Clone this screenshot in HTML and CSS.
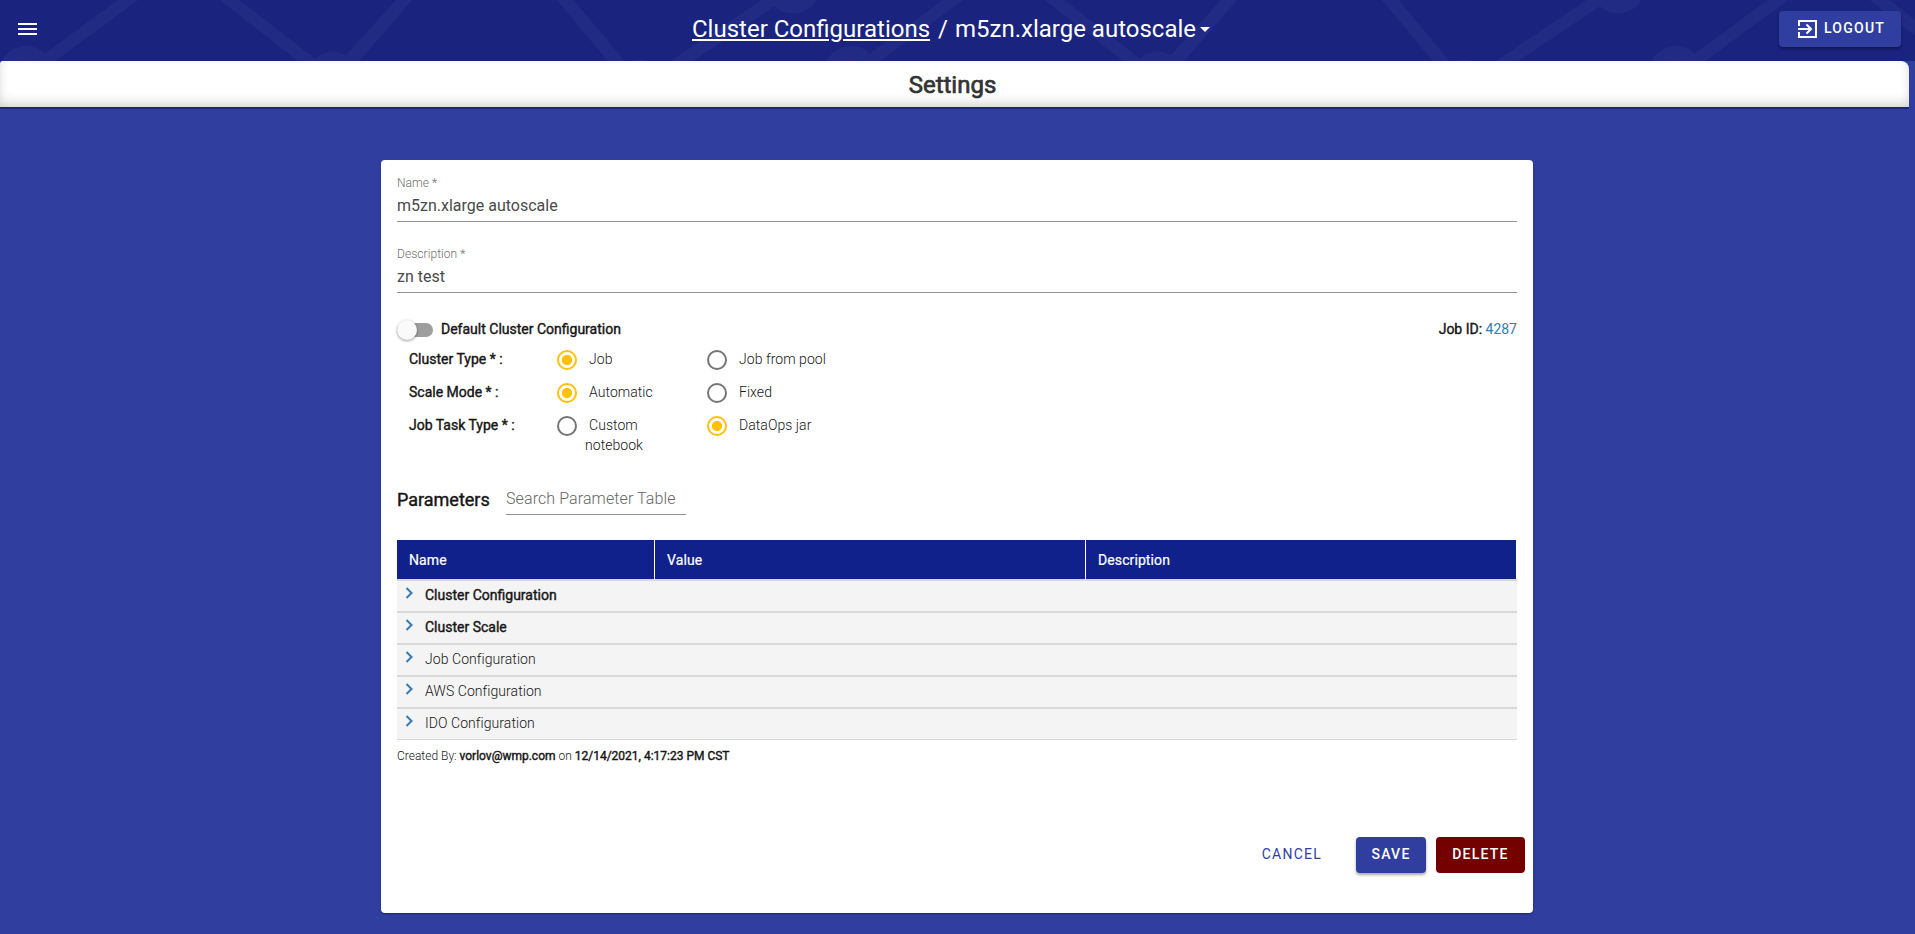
FILE: index.html
```html
<!DOCTYPE html>
<html lang="en">
<head>
<meta charset="utf-8">
<title>Cluster Configurations</title>
<link rel="stylesheet" href="styles.css">
</head>
<body>
<header class="topbar">
  <svg class="topbar-art" width="1915" height="61" aria-hidden="true">
    <defs>
      <pattern id="network" width="825" height="61" patternUnits="userSpaceOnUse">
        <g fill="#212b83">
          <path d="M118 0h20L55 61H35zM220 0h19L318 61H298zM396 0h16L359 61H341zM557 0h16.500L624.500 61H608zM762 0h22L693 61H671z"/>
          <circle cx="26" cy="73" r="27"/>
          <circle cx="333" cy="79" r="27"/>
          <circle cx="640" cy="87" r="27"/>
          <circle cx="793" cy="-13.500" r="27"/>
        </g>
        <g fill="#252c80">
          <circle cx="26" cy="73" r="14.500"/>
          <circle cx="793" cy="-13.500" r="14.500"/>
        </g>
      </pattern>
    </defs>
    <rect width="1915" height="61" fill="url(#network)"/>
  </svg>
  <svg class="menu" width="19" height="12" viewBox="0 0 19 12" fill="#fff"><path d="M0 0h19v2H0zM0 5h19v2H0zM0 10h19v2H0z"/></svg>
  <h1 class="crumbs"><a class="crumb-link">Cluster Configurations</a><span class="slash">/</span><span class="current">m5zn.xlarge autoscale</span><i class="caret"></i></h1>
  <button class="btn logout"><svg width="19" height="18" viewBox="0 0 19 18" fill="none" stroke="#fff" stroke-width="2"><path d="M1 6V1h17v16H1v-5M0 9h13M8.500 4.500L13 9l-4.500 4.500"/></svg><span>LOGOUT</span></button>
</header>
<nav class="tabbar"><span class="tab">Settings</span></nav>
<main class="card">
  <div class="field"><label>Name *</label><div class="value">m5zn.xlarge autoscale</div></div>
  <div class="field"><label>Description *</label><div class="value">zn test</div></div>
  <div class="default-row">
    <span class="toggle"></span><b class="default-label">Default Cluster Configuration</b>
    <span class="job"><b>Job ID:</b> <a>4287</a></span>
  </div>
  <div class="options">
    <b>Cluster Type * :</b><span class="radio on"></span><span class="choice">Job</span><span class="radio"></span><span class="choice">Job from pool</span>
    <b>Scale Mode * :</b><span class="radio on"></span><span class="choice">Automatic</span><span class="radio"></span><span class="choice">Fixed</span>
    <b>Job Task Type * :</b><span class="radio"></span><span class="choice">Custom notebook</span><span class="radio on"></span><span class="choice">DataOps jar</span>
  </div>
  <div class="params"><h2>Parameters</h2><div class="search">Search Parameter Table</div></div>
  <div class="table">
    <div class="thead"><span>Name</span><span>Value</span><span>Description</span></div>
    <div class="row strong"><svg class="chev" width="8" height="12" viewBox="0 0 8 12"><path d="M1.500 1L6.500 6l-5 5"/></svg><span>Cluster Configuration</span></div>
    <div class="row strong"><svg class="chev" width="8" height="12" viewBox="0 0 8 12"><path d="M1.500 1L6.500 6l-5 5"/></svg><span>Cluster Scale</span></div>
    <div class="row"><svg class="chev" width="8" height="12" viewBox="0 0 8 12"><path d="M1.500 1L6.500 6l-5 5"/></svg><span>Job Configuration</span></div>
    <div class="row"><svg class="chev" width="8" height="12" viewBox="0 0 8 12"><path d="M1.500 1L6.500 6l-5 5"/></svg><span>AWS Configuration</span></div>
    <div class="row"><svg class="chev" width="8" height="12" viewBox="0 0 8 12"><path d="M1.500 1L6.500 6l-5 5"/></svg><span>IDO Configuration</span></div>
  </div>
  <p class="created">Created By: <b>vorlov@wmp.com</b> on <b>12/14/2021, 4:17:23 PM CST</b></p>
  <div class="actions"><button class="btn cancel">CANCEL</button><button class="btn save">SAVE</button><button class="btn delete">DELETE</button></div>
</main>
</body>
</html>
```
FILE: styles.css
```css
* { box-sizing: border-box; }
body {
  margin: 0;
  height: 934px;
  overflow: hidden;
  background: #303f9f;
  color: #161616;
  font: 300 14px/20px Roboto, sans-serif;
}
b, .strong, .params h2 {
  font-weight: 400;
  -webkit-text-stroke: .4px currentColor;
}

.topbar {
  position: relative;
  display: grid;
  grid-template-columns: 692px 1fr auto;
  align-items: start;
  height: 61px;
  padding-right: 14px;
  background: #1a237e;
}
.topbar > * { position: relative; }
.topbar .topbar-art { position: absolute; top: 0; left: 0; }
.menu { margin: 23px 0 0 18px; }
.crumbs {
  display: flex;
  align-items: center;
  margin: 13px 0 0;
  color: #fff;
  font-size: 24px;
  font-weight: 400;
  line-height: 32px;
  white-space: nowrap;
}
.crumb-link {
  text-decoration: underline;
  text-decoration-thickness: 2px;
  text-underline-offset: 2px;
}
.slash { margin: 0 7px 0 8px; }
.caret {
  margin-left: 4px;
  border: 5px solid transparent;
  border-top-color: #fff;
  border-bottom: 0;
}

.btn {
  height: 36px;
  padding: 0 0 2px;
  border: 0;
  border-radius: 4px;
  font: 500 14px/34px Roboto, sans-serif;
  letter-spacing: 1.25px;
}
.logout {
  display: flex;
  align-items: center;
  width: 122px;
  margin-top: 11px;
  padding: 0 0 0 19px;
  gap: 7px;
  background: #303f9f;
  color: #fff;
  box-shadow: 0 2px 3px rgba(0, 0, 0, .35);
}
.logout span { line-height: 34px; margin-top: -2px; }

.tabbar {
  width: 1909px;
  height: 48px;
  padding-right: 4px;
  border-bottom: 2px solid #1a237e;
  border-radius: 3px 8px 0 0;
  background: #fff;
  box-shadow: inset 0 -5px 12px -2px rgba(0, 0, 0, .2);
  text-align: center;
}
.tab {
  color: #333;
  font-size: 24px;
  font-weight: 400;
  -webkit-text-stroke: .7px currentColor;
  line-height: 48px;
}

.card {
  width: 1152px;
  height: 753px;
  margin: 51px 0 0 381px;
  padding: 16px;
  border-radius: 4px;
  background: #fff;
  box-shadow: 0 1px 2px rgba(0, 0, 0, .4);
}
.field {
  height: 46px;
  margin-bottom: 25px;
  border-bottom: 1px solid #949494;
}
.field label {
  display: block;
  color: #6e6e6e;
  font-size: 12px;
  line-height: 14px;
  letter-spacing: .06px;
}
.field .value {
  margin-top: 7px;
  font-size: 16px;
  font-weight: 400;
  line-height: 18px;
  color: #4a4a4a;
}
.default-row {
  display: flex;
  align-items: center;
  height: 22px;
}
.toggle {
  position: relative;
  width: 36px;
  height: 14px;
  margin: 2px 8px 0 0;
  border-radius: 7px;
  background: #9e9e9e;
}
.toggle::before {
  content: "";
  position: absolute;
  top: -3px;
  left: 0;
  width: 20px;
  height: 20px;
  border-radius: 50%;
  background: #fafafa;
  box-shadow: 0 1px 3px rgba(0, 0, 0, .4);
}
.job { margin-left: auto; }
.job a { color: #337ab7; font-weight: 400; }
.options {
  display: grid;
  grid-template-columns: 148px 28px 122px 28px 160px;
  grid-template-rows: 33px 33px 53px;
  padding: 9px 0 0 12px;
}
.choice { padding-right: 30px; text-indent: 4px; letter-spacing: .05px; }
.radio {
  width: 20px;
  height: 20px;
  margin-top: 1px;
  border: 2px solid #757575;
  border-radius: 50%;
}
.radio.on {
  border-color: #ffc107;
  background: radial-gradient(circle, #ffc107 4.8px, transparent 5.4px);
}
.params { display: flex; height: 57px; margin-top: 15px; }
.params h2 {
  width: 109px;
  margin: 5px 0 0;
  font-size: 18px;
  line-height: 24px;
}
.search {
  width: 180px;
  height: 32px;
  border-bottom: 1px solid #949494;
  color: #666;
  font-size: 16px;
  line-height: 32px;
  letter-spacing: .1px;
}
.table { border-bottom: 1px solid #d8d8d8; }
.thead {
  display: grid;
  grid-template-columns: 258px 431px 1fr;
  height: 39px;
  margin-right: 1px;
  background: #10218b;
  color: #fff;
  font-weight: 400;
  -webkit-text-stroke: .2px currentColor;
  letter-spacing: .1px;
  line-height: 40px;
}
.thead span { padding-left: 12px; border-right: 1px solid #fff; }
.thead span:last-child { border-right: 0; }
.row {
  display: flex;
  height: 32px;
  padding-left: 8px;
  gap: 12px;
  border-top: 2px solid #d8d8d8;
  background: #f4f4f4;
  line-height: 28px;
  letter-spacing: .06px;
}
.strong { letter-spacing: 0; }
.chev { margin-top: 6px; fill: none; stroke: #337ab7; stroke-width: 2; }
.created { margin: 6px 0 0; font-size: 12px; }
.actions {
  display: flex;
  align-items: center;
  justify-content: flex-end;
  margin: 71px -8px 0 0;
}
.cancel {
  margin-right: 34px;
  background: none;
  color: #303f9f;
  font-weight: 400;
}
.save {
  width: 70px;
  margin-right: 10px;
  background: #303f9f;
  color: #fff;
  box-shadow: 0 2px 3px rgba(0, 0, 0, .35);
}
.delete { width: 89px; background: #750000; color: #fff; }
```
